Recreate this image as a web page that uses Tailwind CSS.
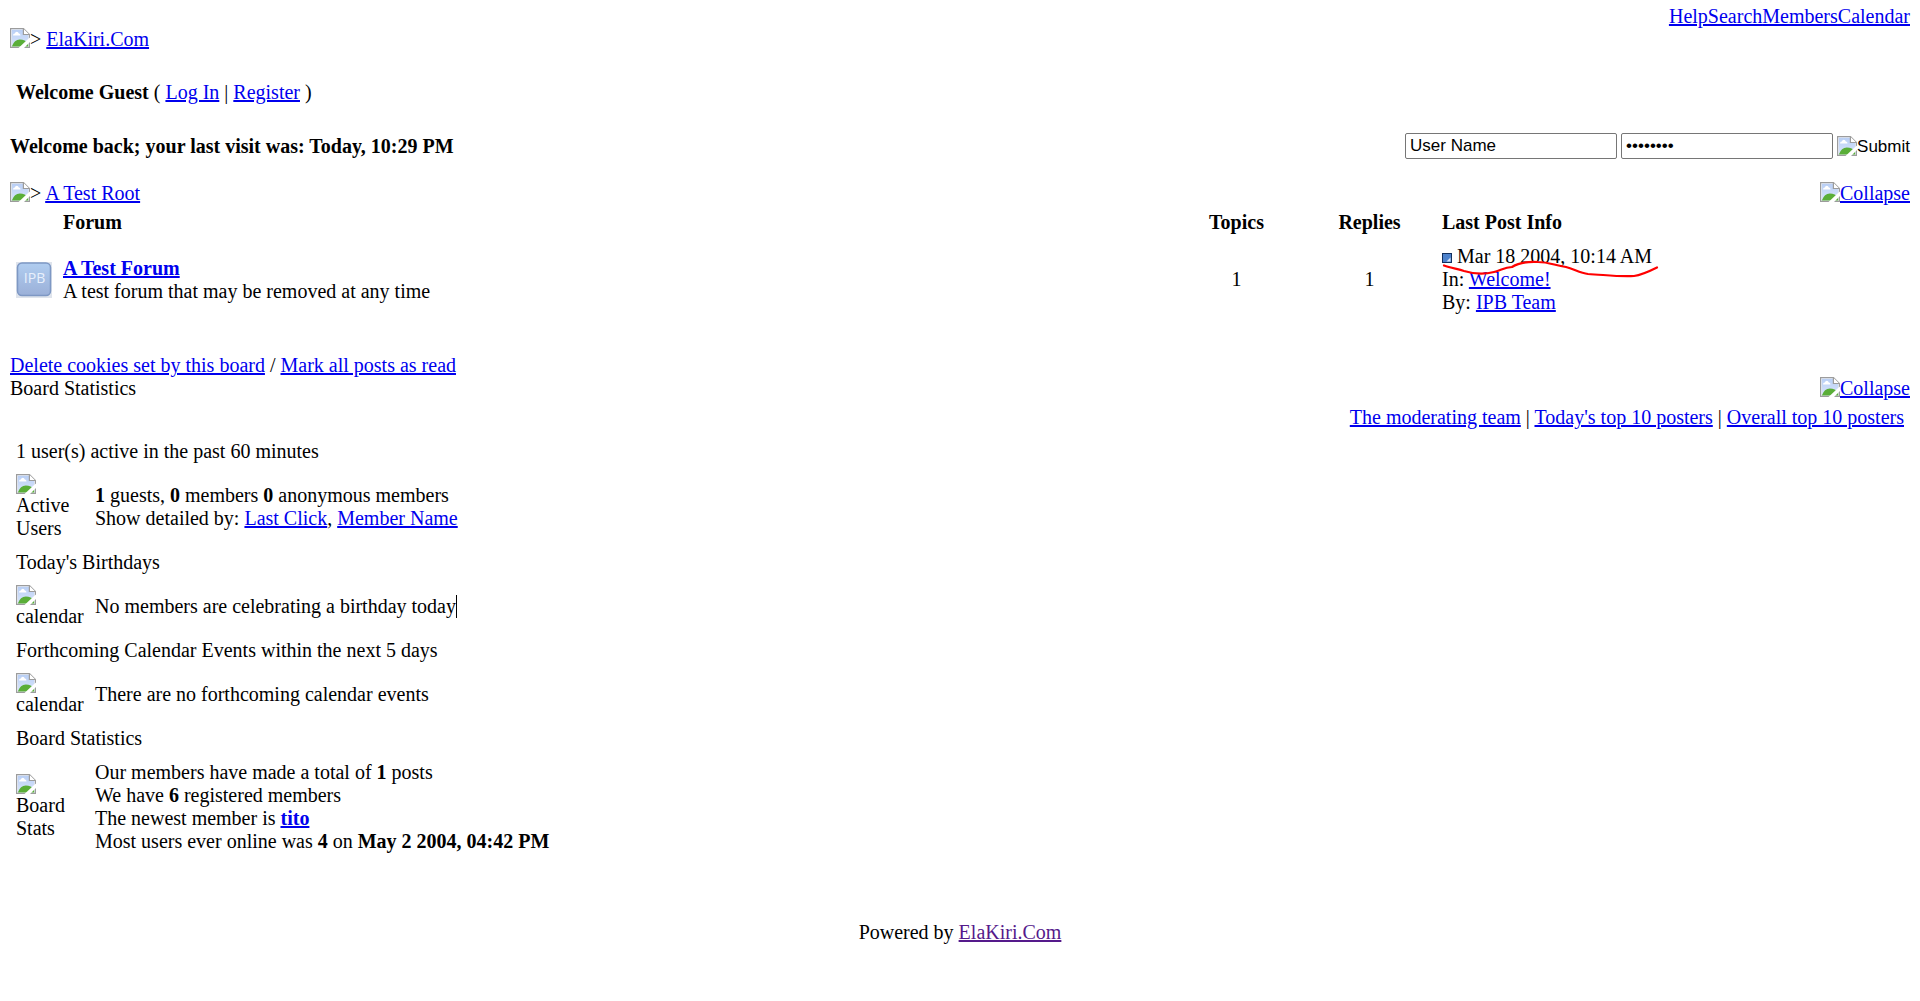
<!DOCTYPE html>
<html lang="en">
<head>
<meta charset="utf-8">
<title>ElaKiri.Com</title>
<script src="https://cdn.jsdelivr.net/npm/@tailwindcss/browser@4"></script>
</head>
<body class="bg-white px-[10px] pt-[5px] font-['Liberation_Serif',serif] text-[20px] leading-[23px] text-black">
<!-- Shared icon: placeholder for a missing image -->
<svg class="absolute size-0" aria-hidden="true">
  <defs>
    <linearGradient id="sky" x1="0" y1="0" x2="0" y2="1"><stop offset="0" stop-color="#b9cff5"/><stop offset="1" stop-color="#d9e5fb"/></linearGradient>
    <symbol id="missing" viewBox="0 0 20 20">
      <path d="M.6.6H13.500L19.400 6.500V19.400H.6z" fill="#f4f7fd" stroke="#9c9c9c" stroke-width="1.200"/>
      <path d="M1.800 1.800H13V7H18.200V18.200H1.800z" fill="url(#sky)"/>
      <path d="M3 7.500q0-2 1.800-2q.5-1.800 2-1.800t2 1.800q1.700 0 1.700 2z" fill="#fff"/>
      <path d="M1.800 18.500q2.500-7 8-7t8.400 4v3z" fill="#5aae38"/>
      <path d="M13.400.8V6.500H19.200" fill="#fff" stroke="#9c9c9c" stroke-width="1.200"/>
      <path d="M20 9.500V14L14 20H8.500L17 12z" fill="#fff"/>
    </symbol>
  </defs>
</svg>

<nav class="flex justify-end text-[#0000ee] underline">
  <a href="#">Help</a><a href="#">Search</a><a href="#">Members</a><a href="#">Calendar</a>
</nav>

<div class="flex">
  <svg class="size-5"><use href="#missing"/></svg>
  <span>&gt; <a href="#" class="text-[#0000ee] underline">ElaKiri.Com</a></span>
</div>

<p class="mt-[30px] pl-[6px]"><b>Welcome Guest</b> ( <a href="#" class="text-[#0000ee] underline">Log In</a> | <a href="#" class="text-[#0000ee] underline">Register</a> )</p>

<form class="mt-[29px] flex items-center justify-between">
  <b>Welcome back; your last visit was: Today, 10:29 PM</b>
  <div class="flex items-center gap-1 font-['Liberation_Sans',sans-serif] text-[17px]">
    <input type="text" aria-label="User name" value="User Name" class="h-[26px] w-[212px] rounded-[2px] border border-[#767676] px-1">
    <input type="password" aria-label="Password" value="password" class="h-[26px] w-[212px] rounded-[2px] border border-[#767676] px-1">
    <button type="submit" class="flex items-center"><svg class="size-5"><use href="#missing"/></svg>Submit</button>
  </div>
</form>

<div class="mt-[23px] flex justify-between">
  <div class="flex">
    <svg class="size-5"><use href="#missing"/></svg>
    <span>&gt; <a href="#" class="text-[#0000ee] underline">A Test Root</a></span>
  </div>
  <a href="#" class="flex text-[#0000ee] underline"><svg class="size-5"><use href="#missing"/></svg>Collapse</a>
</div>

<table class="w-full table-fixed">
  <colgroup><col class="w-[47px]"><col><col class="w-[7%]"><col class="w-[7%]"><col class="w-[25%]"></colgroup>
  <thead>
    <tr>
      <td></td>
      <th class="px-[6px] py-[6px] text-left">Forum</th>
      <th class="py-[6px] pl-[2px]">Topics</th>
      <th class="py-[6px] pl-[2px]">Replies</th>
      <th class="px-[7px] py-[6px] text-left">Last Post Info</th>
    </tr>
  </thead>
  <tbody>
    <tr>
      <td class="py-[5px] pl-[6px]">
        <svg class="size-9" viewBox="0 0 36 36" role="img" aria-label="IPB">
          <defs><linearGradient id="tile" x1="0" y1="0" x2="0" y2="1"><stop offset="0" stop-color="#b0cdf0"/><stop offset="1" stop-color="#9bb0d8"/></linearGradient></defs>
          <rect width="36" height="36" fill="#dfe4ec"/>
          <rect x="1.500" y="1" width="33" height="32.500" rx="4.500" fill="url(#tile)" stroke="#7e98c4" stroke-width="1.500"/>
          <text x="18.500" y="21" text-anchor="middle" font-family="Open Sans, sans-serif" font-size="14" fill="#e8f0fc">IPB</text>
        </svg>
      </td>
      <td class="px-[6px] py-[5px]">
        <a href="#" class="font-bold text-[#0000ee] underline">A Test Forum</a><br>
        A test forum that may be removed at any time
      </td>
      <td class="py-[5px] pl-[2px] text-center">1</td>
      <td class="py-[5px] pl-[2px] text-center">1</td>
      <td class="px-[7px] py-[5px]">
        <div class="relative">
          <svg class="mr-[5px] inline-block size-[10px] align-baseline" viewBox="0 0 10 10" aria-hidden="true">
            <rect x=".5" y=".5" width="9" height="9" fill="#4d82cc" stroke="#12305f"/>
            <path d="M8.500 4.500V8.500H4.500z" fill="#dce8f8"/>
          </svg>Mar 18 2004, 10:14 AM<br>
          In: <a href="#" class="text-[#0000ee] underline">Welcome!</a><br>
          By: <a href="#" class="text-[#0000ee] underline">IPB Team</a>
          <!-- Red pen stroke under the date -->
          <svg class="pointer-events-none absolute top-[14px] left-0 h-5 w-[220px]" viewBox="0 0 220 20" fill="none" stroke="#f00" stroke-width="2.200" stroke-linecap="round" stroke-linejoin="round" aria-hidden="true">
            <path d="M2 6.500C9 9 16 10 22 12C32 15 44 15 52 13C60 11 62 8.500 70 8C76 4 85 2.500 96 3C106 3 112 6 124 8C132 10 138 14 146 15C160 15.500 176 18 192 17C200 16 208 12 215 8.500"/>
          </svg>
        </div>
      </td>
    </tr>
  </tbody>
</table>

<p class="mt-[35px]"><a href="#" class="text-[#0000ee] underline">Delete cookies set by this board</a> / <a href="#" class="text-[#0000ee] underline">Mark all posts as read</a></p>

<div class="flex justify-between">
  <span>Board Statistics</span>
  <a href="#" class="flex text-[#0000ee] underline"><svg class="size-5"><use href="#missing"/></svg>Collapse</a>
</div>

<p class="mt-[6px] pr-[6px] text-right"><a href="#" class="text-[#0000ee] underline">The moderating team</a> | <a href="#" class="text-[#0000ee] underline">Today's top 10 posters</a> | <a href="#" class="text-[#0000ee] underline">Overall top 10 posters</a></p>

<main class="mt-[11px] flex flex-col gap-[11px] px-[6px]">
  <h2>1 user(s) active in the past 60 minutes</h2>
  <div class="flex items-center gap-[11px]">
    <div class="w-[68px]"><svg class="size-5"><use href="#missing"/></svg>Active<br>Users</div>
    <p><b>1</b> guests, <b>0</b> members <b>0</b> anonymous members<br>Show detailed by: <a href="#" class="text-[#0000ee] underline">Last Click</a>, <a href="#" class="text-[#0000ee] underline">Member Name</a></p>
  </div>
  <h2>Today's Birthdays</h2>
  <div class="flex items-center gap-[11px]">
    <div class="w-[68px]"><svg class="size-5"><use href="#missing"/></svg>calendar</div>
    <p class="border-r border-black">No members are celebrating a birthday today</p>
  </div>
  <h2>Forthcoming Calendar Events within the next 5 days</h2>
  <div class="flex items-center gap-[11px]">
    <div class="w-[68px]"><svg class="size-5"><use href="#missing"/></svg>calendar</div>
    <p>There are no forthcoming calendar events</p>
  </div>
  <h2>Board Statistics</h2>
  <div class="flex items-center gap-[11px]">
    <div class="w-[68px]"><svg class="size-5"><use href="#missing"/></svg>Board<br>Stats</div>
    <p>Our members have made a total of <b>1</b> posts<br>We have <b>6</b> registered members<br>The newest member is <a href="#" class="font-bold text-[#0000ee] underline">tito</a><br>Most users ever online was <b>4</b> on <b>May 2 2004, 04:42 PM</b></p>
  </div>
</main>

<footer class="mt-[68px] text-center">Powered by <a href="#" class="text-[#551a8b] underline">ElaKiri.Com</a></footer>
</body>
</html>
